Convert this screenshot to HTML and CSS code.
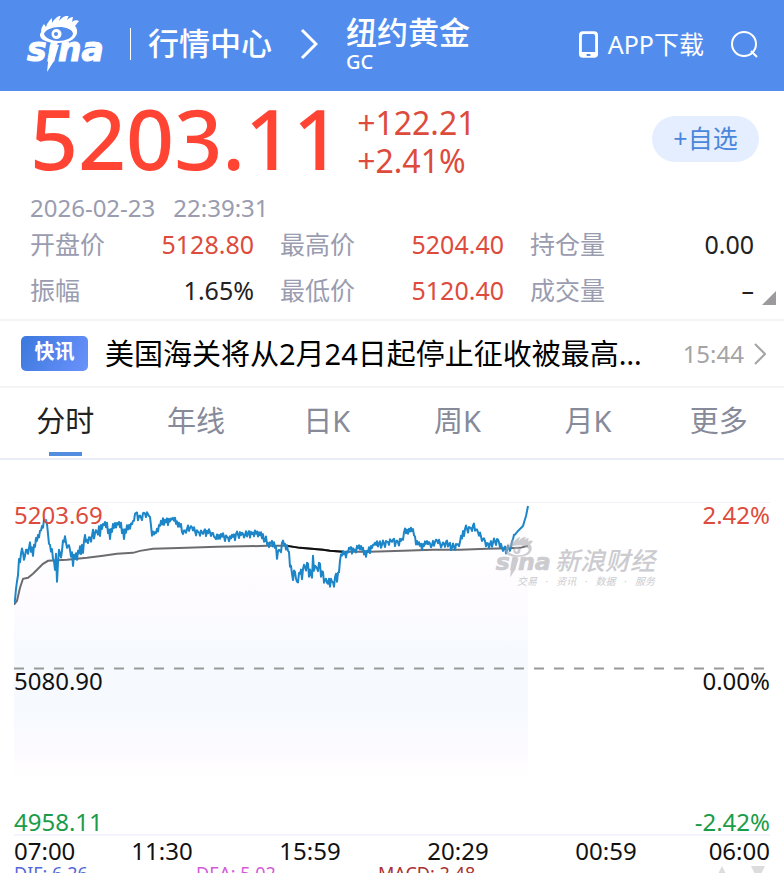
FILE: index.html
```html
<!DOCTYPE html>
<html lang="zh-CN">
<head>
  <meta charset="UTF-8">
  <meta name="viewport" content="width=device-width, initial-scale=1">
  <title>纽约黄金 GC</title>
  <link rel="stylesheet" href="styles.css">
  <script src="chart.js" defer></script>
</head>
<body>

  <svg class="defs" aria-hidden="true">
    <symbol id="sina" viewBox="0 0 78 56" overflow="visible">
      <path d="M16 18 C14 14 16 11 18 8 L20 11 C21 7 23 5 26 2 L26 7 C28 3 31 1 35 -1 L33 5 C36 1 39 0 43 -1 L41 4 C43 2 45 1 47 1 L46 6 C48 4 51 4 53 5 L49 10 C51 12 52 16 50 20 C44 8 24 7 16 18 Z"/>
      <path fill-rule="evenodd" d="M14 18 C17 12 25 9 33 9 C43 9 51 13 50 19 C49 24 41 27 32 27 C22 27 13 24 14 18 Z M18 18 C19 22 26 25 32 25 C40 25 46 22 47 18 C47 13 40 11 33 11 C26 11 19 14 18 18 Z"/>
      <path fill-rule="evenodd" d="M31 13 A5 5 0 1 1 30 23 A5 5 0 1 1 31 13 Z M30 16 A2 2 0 1 0 30 20 A2 2 0 1 0 30 16 Z"/>
      <path d="M24 29 L33 29 L28 45 L21 56 Z"/>
      <text x="1" y="45">sına</text>
    </symbol>
  </svg>

  <header class="header">
    <a href="#" class="logo" aria-label="sina"><svg viewBox="0 0 78 56"><use href="#sina"/></svg></a>
    <a href="#" class="center">行情中心</a>
    <svg class="arrow" viewBox="0 0 18 32"><path d="M2 2 L16 16 L2 30"/></svg>
    <div class="name">
      <h1>纽约黄金</h1>
      <p>GC</p>
    </div>
    <a href="#" class="app">
      <svg viewBox="0 0 20 28"><path fill-rule="evenodd" d="M4 0 H16 Q20 0 20 4 V24 Q20 28 16 28 H4 Q0 28 0 24 V4 Q0 0 4 0 Z M5 3 Q3 3 3 5 V22 H17 V5 Q17 3 15 3 Z M8 24 V26 H12 V24 Z"/></svg>
      APP下载
    </a>
    <button class="search" aria-label="搜索">
      <svg viewBox="0 0 28 28"><circle cx="14" cy="14" r="12"/><path d="M21 21 L27 27"/></svg>
    </button>
  </header>

  <section class="quote">
    <div class="quote_top">
      <p class="price">5203.11</p>
      <div class="change">
        <p>+122.21</p>
        <p>+2.41%</p>
      </div>
      <button class="add">+自选</button>
    </div>
    <p class="time"><span>2026-02-23</span><span>22:39:31</span></p>
    <dl class="stats">
      <div><dt>开盘价</dt><dd class="up">5128.80</dd></div>
      <div><dt>最高价</dt><dd class="up">5204.40</dd></div>
      <div><dt>持仓量</dt><dd>0.00</dd></div>
      <div><dt>振幅</dt><dd>1.65%</dd></div>
      <div><dt>最低价</dt><dd class="up">5120.40</dd></div>
      <div><dt>成交量</dt><dd>–</dd></div>
    </dl>
    <span class="corner"></span>
  </section>

  <a href="#" class="news">
    <span class="tag">快讯</span>
    <span class="title">美国海关将从2月24日起停止征收被最高…</span>
    <span class="news_time">15:44</span>
    <svg viewBox="0 0 12 22"><path d="M1 1 L11 11 L1 21"/></svg>
  </a>

  <nav class="tabs">
    <a href="#" class="active">分时</a>
    <a href="#">年线</a>
    <a href="#">日K</a>
    <a href="#">周K</a>
    <a href="#">月K</a>
    <a href="#">更多</a>
  </nav>

  <main class="chart">
    <div class="plot">
      <svg class="lines" viewBox="0 0 756 332" preserveAspectRatio="none">
        <defs>
          <linearGradient id="fill" gradientUnits="userSpaceOnUse" x1="0" y1="0" x2="0" y2="276">
            <stop offset="0" stop-color="#fff"/>
            <stop offset="0.38" stop-color="#fdfbff"/>
            <stop offset="0.54" stop-color="#f6faff"/>
            <stop offset="0.75" stop-color="#f6faff"/>
            <stop offset="0.9" stop-color="#fdfaff"/>
            <stop offset="1" stop-color="#fff"/>
          </linearGradient>
        </defs>
        <path id="area" fill="url(#fill)"/>
        <path class="base" d="M0 166 H756"/>
        <path id="average" class="average"/>
        <path id="average_mid" class="average dark"/>
        <path id="price" class="price_line"/>
      </svg>
      <div class="labels">
        <p class="up"><span>5203.69</span><span>2.42%</span></p>
        <p class="mid"><span>5080.90</span><span>0.00%</span></p>
        <p class="down"><span>4958.11</span><span>-2.42%</span></p>
      </div>
      <div class="watermark">
        <svg viewBox="0 0 78 56"><use href="#sina"/></svg>
        <div>
          <p class="brand">新浪财经</p>
          <p class="slogan"><span>交易</span><span>·</span><span>资讯</span><span>·</span><span>数据</span><span>·</span><span>服务</span></p>
        </div>
      </div>
    </div>
    <div class="axis">
      <span>07:00</span>
      <span>11:30</span>
      <span>15:59</span>
      <span>20:29</span>
      <span>00:59</span>
      <span>06:00</span>
    </div>
    <div class="macd">
      <span class="dif">DIF: 6.26</span>
      <span class="dea">DEA: 5.02</span>
      <span class="bar">MACD: 2.48</span>
      <svg viewBox="0 0 50 14"><path d="M7 0 L14 14 H0 Z M36 0 H50 L43 14 Z"/></svg>
    </div>
  </main>

</body>
</html>
```
FILE: styles.css
```css
* {
  box-sizing: border-box;
}

body, h1, p, dl, dd {
  margin: 0;
}

body {
  height: 100vh;
  overflow: hidden;
  background: #fff;
  color: #222;
  font-family: "Noto Sans", "Noto Sans CJK SC", sans-serif;
  font-size: 25px;
}

a {
  color: inherit;
  text-decoration: none;
}

button {
  border: 0;
  padding: 0;
  background: none;
  color: inherit;
  font: inherit;
}

svg {
  display: block;
  flex: none;
}

.up {
  color: #dd4b3c;
}

.down {
  color: #1a9c48;
}

.defs {
  position: absolute;
  width: 0;
  height: 0;
}

#sina text {
  font: italic bold 33px "DejaVu Sans", sans-serif;
  stroke: currentColor;
  stroke-width: 1;
}

/* header */
.header {
  display: flex;
  align-items: center;
  height: 91px;
  padding: 0 26px 3px;
  background: #528dee;
  color: #fff;
}

.logo {
  padding-right: 27px;
  margin-right: 17px;
  background: linear-gradient(#fff, #fff) right center / 1px 32px no-repeat;
}

.logo svg {
  width: 78px;
  height: 56px;
  fill: #fff;
}

.center, .name h1 {
  font-size: 31px;
  font-weight: 500;
  line-height: 36px;
}

.center {
  padding-bottom: 2px;
}

.arrow {
  width: 18px;
  height: 32px;
  margin: 0 28px;
  fill: none;
  stroke: #fff;
  stroke-width: 3;
}

.name {
  flex: 1;
}

.name p {
  font-size: 20px;
  font-weight: 500;
  line-height: 24px;
}

.app {
  display: flex;
  align-items: center;
  gap: 10px;
  line-height: 28px;
}

.app svg {
  width: 19px;
  height: 27px;
  fill: #fff;
}

.search {
  margin-left: 26px;
}

.search svg {
  width: 28px;
  height: 28px;
  fill: none;
  stroke: #fff;
  stroke-width: 2;
}

/* quote */
.quote {
  position: relative;
  padding: 0 30px 6px;
  border-bottom: 2px solid #f4f4f6;
}

.quote_top {
  display: flex;
  align-items: center;
}

.price {
  color: #ff4433;
  font-size: 84px;
  font-weight: 500;
  line-height: 94px;
}

.change {
  flex: 1;
  padding: 8px 0 0 16px;
  color: #dd4b3c;
  font-size: 32px;
  line-height: 38px;
}

.add {
  width: 107px;
  height: 46px;
  margin: 2px -5px 0 0;
  padding-bottom: 4px;
  border-radius: 23px;
  background: #e5eeff;
  color: #4a86dc;
}

.time {
  display: flex;
  gap: 18px;
  padding-top: 10px;
  color: #9a9cb0;
  font-size: 24px;
  line-height: 26px;
}

.stats {
  display: grid;
  grid-template-columns: repeat(3, 1fr);
  column-gap: 26px;
  line-height: 46px;
}

.stats div {
  display: flex;
  justify-content: space-between;
}

.stats dt {
  color: #9a9cb0;
}

.corner {
  position: absolute;
  right: 8px;
  bottom: 14px;
  border: 7px solid #9c9a9e;
  border-top-color: transparent;
  border-left-color: transparent;
}

/* news */
.news {
  display: flex;
  align-items: center;
  height: 67px;
  padding: 0 18px 0 21px;
  border-bottom: 2px solid #f4f4f6;
  color: #000;
}

.tag {
  height: 35px;
  width: 67px;
  margin-right: 17px;
  border-radius: 5px;
  background: linear-gradient(120deg, #3b78dd, #6a92fb);
  color: #fff;
  font-size: 20px;
  font-weight: bold;
  line-height: 32px;
  text-align: center;
}

.title {
  flex: 1;
  overflow: hidden;
  font-size: 29px;
  line-height: 40px;
  text-overflow: ellipsis;
  white-space: nowrap;
}

.news_time {
  margin: 0 10px 0 20px;
  color: #a4a4a6;
  font-size: 24px;
}

.news svg {
  width: 12px;
  height: 22px;
  fill: none;
  stroke: #a4a4a6;
  stroke-width: 2;
}

/* tabs */
.tabs {
  display: flex;
  border-bottom: 2px solid #e9ebf6;
  color: #868a99;
  font-size: 29px;
  line-height: 66px;
}

.tabs a {
  flex: 1;
  padding-bottom: 4px;
  text-align: center;
}

.tabs .active {
  background: linear-gradient(#528ddf, #528ddf) center bottom 2px / 33px 4px no-repeat;
  color: #222;
}

/* chart */
.chart {
  padding: 42px 14px 0;
  font-size: 24px;
}

.plot {
  position: relative;
  border-top: 1px solid #f0f1fa;
  border-bottom: 2px solid #f3f4fc;
}

.lines {
  width: 100%;
  height: 331px;
}

.lines path {
  vector-effect: non-scaling-stroke;
}

.base {
  stroke: #999;
  stroke-width: 2;
  stroke-dasharray: 10 10;
}

.average {
  fill: none;
  stroke: #6c6c70;
  stroke-width: 2;
}

.average.dark {
  stroke: #111;
}

.price_line {
  fill: none;
  stroke: #1d86c8;
  stroke-width: 2;
  stroke-linejoin: round;
}

.labels {
  position: absolute;
  inset: 0;
  display: grid;
  grid-template-rows: 1fr 1fr auto;
  line-height: 24px;
}

.labels p {
  display: flex;
  justify-content: space-between;
}

.labels .mid {
  padding-top: 12px;
  color: #111;
}

.watermark {
  position: absolute;
  top: 33px;
  right: 115px;
  display: flex;
  gap: 4px;
  opacity: 0.6;
  color: #aaaab2;
  font-style: italic;
}

.watermark svg {
  width: 56px;
  height: 43px;
  fill: #aaaab2;
}

.brand {
  padding-top: 9px;
  font-size: 25px;
  font-weight: 500;
  line-height: 30px;
}

.slogan {
  display: flex;
  justify-content: space-between;
  margin-left: -38px;
  font-size: 10px;
  line-height: 12px;
}

.axis {
  display: grid;
  grid-template-columns: 74fr 148fr 148fr 148fr 148fr 90fr;
  color: #111;
  line-height: 30px;
  text-align: center;
}

.axis span:first-child {
  text-align: left;
}

.axis span:last-child {
  text-align: right;
}

.macd {
  display: grid;
  grid-template-columns: 182fr 182fr 337fr 55px;
  font-size: 18px;
  line-height: 14px;
}

.dif {
  color: #5468d8;
}

.dea {
  color: #d45bd8;
}

.bar {
  color: #a83232;
}

.macd svg {
  width: 50px;
  height: 14px;
  fill: #dcdcdc;
}
```
FILE: chart.js
```js
// x, y pairs in plot units (756 x 332)
const price = [
  [0,100],[3,81],[5,58],[8,48],[11,51],[15,43],[19,45],[24,35],[28,25],[31,18],[33,22],[34,35],[36,45],[39,50],
  [41,71],[42,51],[43,71],[45,51],[48,46],[50,33],[53,40],[56,48],[59,56],[63,51],[68,45],[71,36],[73,40],[78,31],
  [83,30],[86,26],[91,21],[96,28],[101,23],[105,21],[110,28],[115,25],[119,20],[122,10],[126,15],[130,11],[135,10],
  [137,18],[138,31],[141,31],[144,25],[149,17],[154,18],[159,16],[164,19],[168,25],[169,30],[173,25],[178,25],
  [184,30],[189,28],[198,29],[201,36],[206,31],[213,35],[219,34],[223,31],[231,31],[239,29],[244,30],[249,33],
  [251,35],[254,43],[258,40],[261,45],[265,51],[268,38],[271,43],[274,48],[277,60],[278,70],[281,71],[283,81],
  [286,71],[290,66],[293,58],[295,68],[298,70],[299,56],[302,68],[305,58],[307,68],[309,73],[313,81],[315,75],
  [318,81],[322,75],[324,73],[326,56],[329,50],[332,51],[336,46],[341,46],[346,43],[351,50],[356,46],[361,41],
  [368,40],[373,40],[378,36],[383,40],[388,36],[391,28],[394,26],[399,28],[402,38],[406,43],[413,40],[418,41],
  [423,38],[428,41],[433,40],[438,43],[443,43],[446,38],[449,30],[452,25],[456,26],[460,23],[464,30],[469,35],
  [474,43],[479,38],[484,38],[489,45],[493,46],[497,43],[500,33],[504,28],[509,23],[512,13],[514,3]
];

const average = [
  [0,102],[3,98],[6,85],[9,76],[14,75],[19,71],[24,66],[29,61],[34,58],[53,57],[73,55],[89,53],[103,51],[119,50],
  [126,48],[139,46],[173,45],[203,44],[253,43],[273,43],[286,45],[309,47],[316,48],[329,49],[356,49],[389,48],
  [419,47],[446,47],[473,46],[506,45],[514,43]
];

// tick noise between the key points
const noise = [0, 6, -2, 2, -4, 5, 0, -3, 8, -1, 3, -4, 1, 7, -3, 2, -2];

function toPath(points) {
  return 'M' + points.map(p => p.join(' ')).join(' L');
}

function addTicks(points) {
  const out = [];
  for (let i = 0; i < points.length - 1; i++) {
    const [x1, y1] = points[i];
    const [x2, y2] = points[i + 1];
    for (let x = x1; x < x2; x++) {
      const y = y1 + (y2 - y1) * (x - x1) / (x2 - x1);
      const wide = (x > 8 && x < 120) || (x > 250 && x < 325) ? 1 : 0.6;
      const n = x > 500 ? 0 : noise[(x + i) % noise.length] * wide;
      out.push([x, Math.round((y + n) * 10) / 10]);
    }
  }
  out.push(points[points.length - 1]);
  return out;
}

const line = toPath(addTicks(price));
document.querySelector('#price').setAttribute('d', line);
document.querySelector('#area').setAttribute('d', line + ' L514 276 L0 276 Z');
document.querySelector('#average').setAttribute('d', toPath(average));
document.querySelector('#average_mid').setAttribute('d', toPath(average.filter(p => p[0] > 270 && p[0] < 330)));
```
